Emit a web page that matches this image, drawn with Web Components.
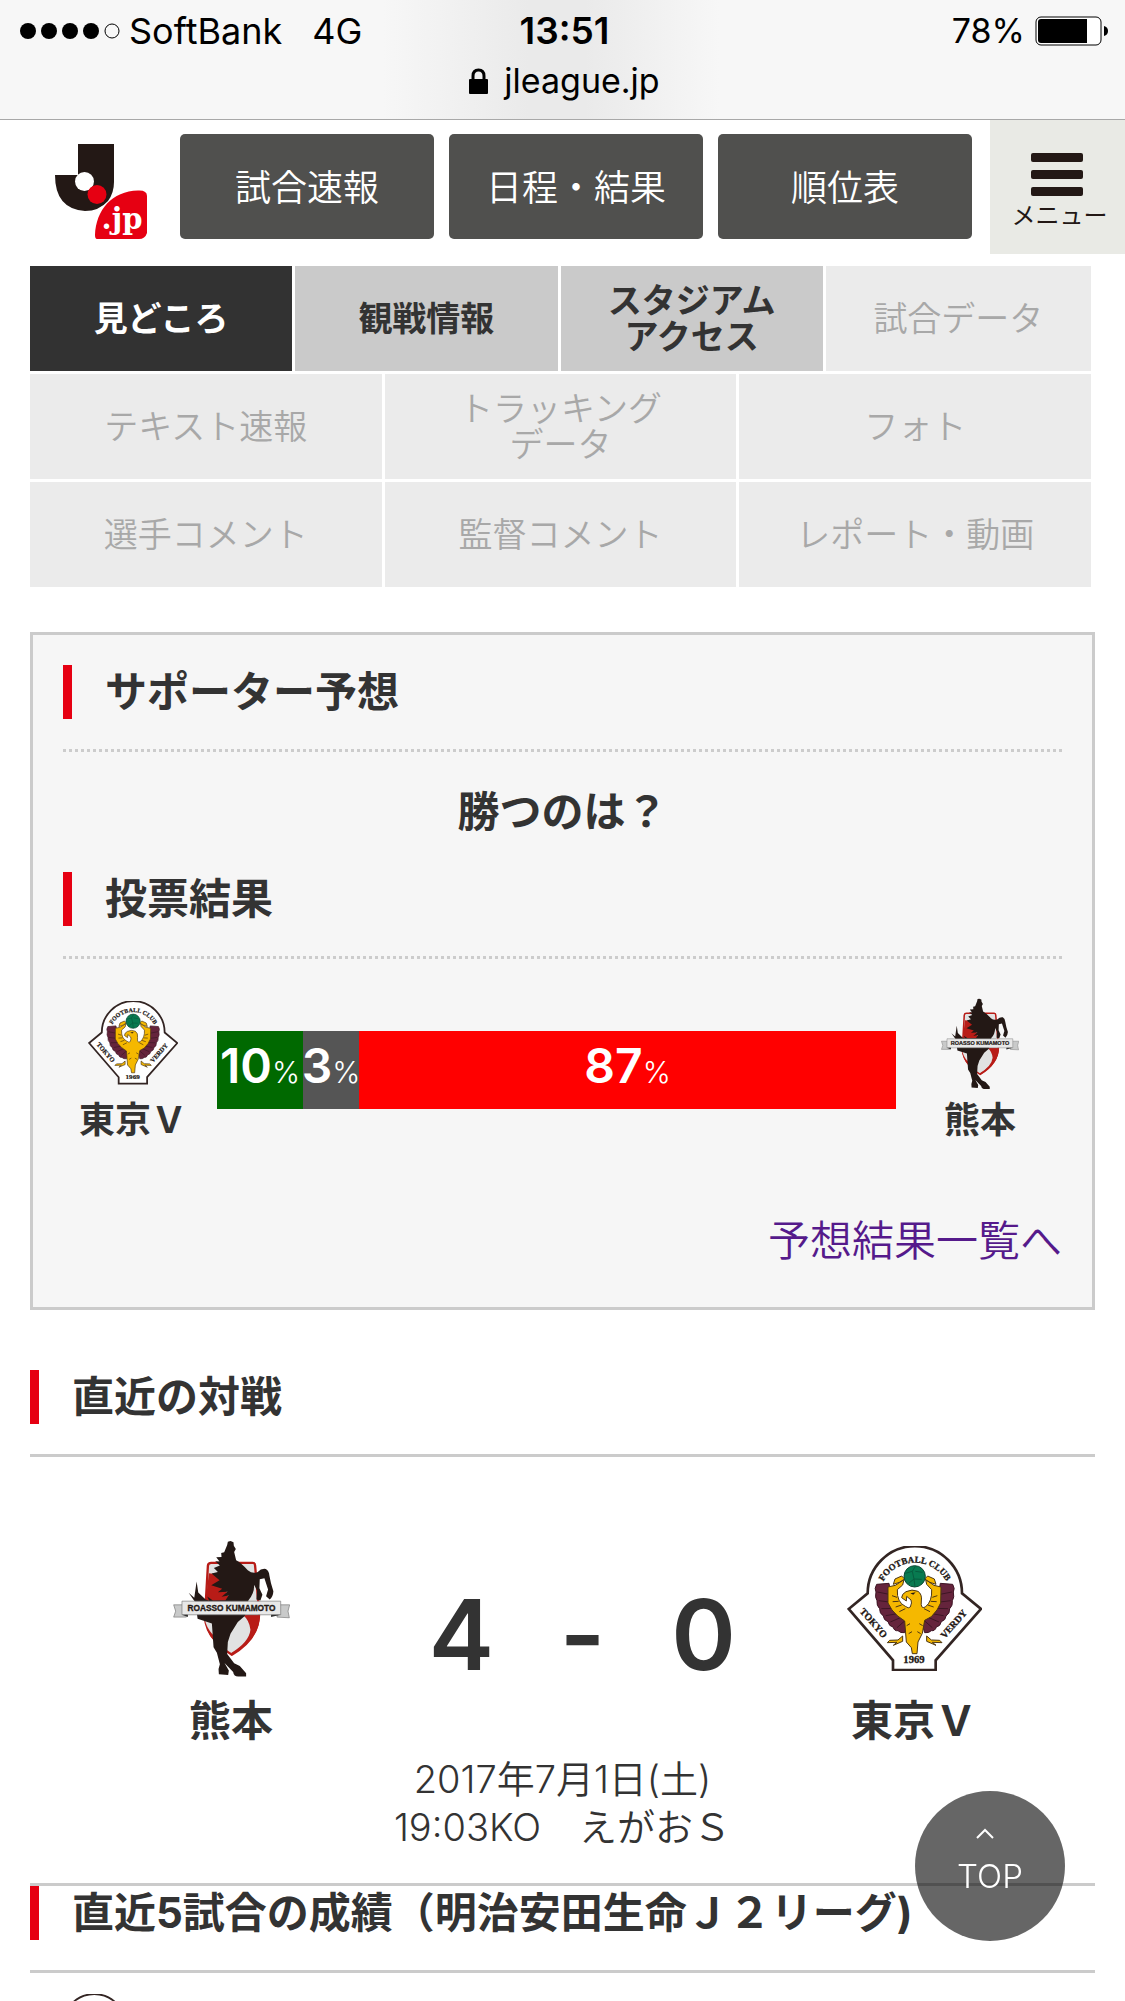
<!DOCTYPE html>
<html lang="ja">
<head>
<meta charset="utf-8">
<meta name="viewport" content="width=device-width">
<title>J.League.jp</title>
<style>
html, body { margin: 0; height: 100%; }
body { background: #fff; color: #333; font-family: "Noto Sans CJK JP", sans-serif; overflow: hidden; }
</style>
</head>
<body>
<match-page></match-page>
<script>
const define = (name, html) => {
  const t = document.createElement('template');
  t.innerHTML = html;
  customElements.define(name, class extends HTMLElement {
    constructor() {
      super();
      this.attachShadow({ mode: 'open' }).append(t.content.cloneNode(true));
    }
  });
};

define('status-bar', `
<style>
:host { display: block; box-sizing: border-box; height: 120px; border-bottom: 1px solid #a8a8a8; color: #000;
  background: linear-gradient(90deg, #f7f7f7 34%, #eaeaea 47%, #eaeaea 52%, #f7f7f7 64%);
  font: 400 36px/50px Inter, sans-serif; padding: 6px 16px 0 20px; }
.row { display: grid; grid-template-columns: 1fr auto 1fr; align-items: center; }
.left, .right, .url { display: flex; align-items: center; }
.left { gap: 8px; }
.right { justify-content: flex-end; gap: 10px; font-size: 34px; }
.net { margin-left: 22px; }
.time { font-weight: 600; font-size: 37px; }
.url { justify-content: center; gap: 16px; font-size: 34px; }
svg { display: block; }
</style>
<div class="row">
  <div class="left">
    <svg width="101" height="18"><g><circle cx="8" cy="9" r="8"/><circle cx="29" cy="9" r="8"/><circle cx="50" cy="9" r="8"/><circle cx="71" cy="9" r="8"/></g><circle cx="92" cy="9" r="7" fill="none" stroke="#000"/></svg>
    <span>SoftBank</span><span class="net">4G</span>
  </div>
  <span class="time">13:51</span>
  <div class="right"><span>78%</span>
    <svg width="74" height="30"><rect x="1" y="1" width="65" height="28" rx="5" fill="#fff" stroke="#000"/><path d="M6 3H52V27H6Q3 27 3 24V6Q3 3 6 3Z"/><path d="M69 10Q73 11 73 15T69 20Z"/></svg>
  </div>
</div>
<div class="url">
  <svg width="19" height="26"><rect y="11" width="19" height="15" rx="1"/><path d="M4 12V8Q4 2 9.500 2T15 8V12" fill="none" stroke="#000" stroke-width="3"/></svg>
  <span>jleague.jp</span>
</div>`);

define('site-header', `
<style>
:host { display: flex; align-items: flex-start; height: 134px; padding-left: 55px; }
.logo { margin: 23px 33px 0 0; display: block; width: 92px; height: 97px; }
nav { flex: 1; display: flex; gap: 15px; margin: 14px 18px 0 0; }
nav a { flex: 1; box-sizing: border-box; height: 105px; padding-bottom: 4px; border-radius: 5px; background: #50504e; color: #fff; text-decoration: none;
  font-size: 36px; font-weight: 350; display: flex; align-items: center; justify-content: center; }
button { border: 0; margin: 0; padding: 33px 0 0 4px; width: 135px; height: 134px; background: #e9eae5; color: #231815;
  font: 400 24px/32px "Noto Sans CJK JP", sans-serif; display: flex; flex-direction: column; align-items: center; gap: 2px; white-space: nowrap; }
button svg { margin-right: 6px; }
svg { display: block; }
</style>
<a class="logo" href="#" aria-label="J.League">
<svg width="92" height="97" viewBox="55 143 92 97">
  <path d="M78 144H114V182Q114 193 108 201Q99 211 85 211Q55 209 55 175H78Z" fill="#231815"/>
  <circle cx="84.500" cy="181.500" r="9.500" fill="#fff"/><circle cx="97" cy="194.500" r="9.500" fill="#e60012"/>
  <path d="M95 235C96 210 112 191 138 190.500Q147 190 147 196V233Q145 239 139 239H97Q95 239 95 235Z" fill="#e60012"/>
  <text x="122" y="229" text-anchor="middle" font-family="DejaVu Serif" font-weight="700" font-size="29" fill="#fff">.jp</text>
</svg></a>
<nav><a href="#">試合速報</a><a href="#">日程・結果</a><a href="#">順位表</a></nav>
<button type="button"><svg width="52" height="43" fill="#231815"><rect width="52" height="9" rx="2"/><rect y="17" width="52" height="9" rx="2"/><rect y="34" width="52" height="9" rx="2"/></svg><span>メニュー</span></button>`);

define('tab-row', `
<style>
:host { display: flex; gap: 3px; }
::slotted(*) { flex: 1 1 0; }
:host([four]) ::slotted(:not(:last-child)) { flex: 0 0 calc(25% - 3px); }
</style><slot></slot>`);

customElements.define('match-tab', class extends HTMLElement {
  connectedCallback() {
    const off = this.hasAttribute('disabled');
    this.attachShadow({ mode: 'open' }).innerHTML = `
<style>
:host { display: block; min-width: 0; }
a, button { box-sizing: border-box; width: 100%; height: 105px; margin: 0; padding: 0 0 4px; border: 0; display: flex; align-items: center;
  justify-content: center; text-align: center; text-decoration: none; white-space: pre-line;
  font: 700 34px/36px "Noto Sans CJK JP", sans-serif; background: #cacaca; color: #333; }
button { font-weight: 350; background: #ebebeb; color: #a8a8a8; }
:host([current]) a { background: #323232; color: #fff; }
</style>` + (off ? '<button type="button" disabled><span><slot></slot></span></button>' : '<a href="#"><span><slot></slot></span></a>');
  }
});

define('section-title', `
<style>
:host { display: block; padding-bottom: 30px; border-bottom: 3px solid #cbcbcb; }
:host([dotted]) { border: 0; padding-bottom: 33px;
  background: repeating-linear-gradient(90deg, #ccc 0 3px, transparent 3px 6px) left bottom / 100% 3px no-repeat; }
h2 { margin: 0; border-left: 9px solid #e60012; padding-left: 33px; font: 700 42px/54px Inter, "Noto Sans CJK JP", sans-serif; white-space: nowrap; }
</style><h2><slot></slot></h2>`);

define('verdy-crest', `
<style>:host { display: block; aspect-ratio: 405 / 377; } svg { display: block; width: 100%; height: 100%; }</style>
<svg viewBox="85 75 405 377">
  <path d="M147 217A141 141 0 0 1 430 217L487 264L351 418V447H223V418L90 264Z" fill="#fff" stroke="#332523" stroke-width="8"/>
  <defs><path id="top" d="M191 188A107 107 0 0 1 386 188"/><path id="l" d="M122 272L196 356"/><path id="r" d="M378 354L452 270"/></defs>
  <g font-family="Liberation Serif" font-weight="700" fill="#231815" stroke="#231815">
    <text font-size="27" text-anchor="middle"><textPath href="#top" startOffset="50%">FOOTBALL CLUB</textPath></text>
    <text font-size="29"><textPath href="#l">TOKYO</textPath></text>
    <text font-size="29"><textPath href="#r">VERDY</textPath></text>
    <text x="286" y="427" font-size="32" text-anchor="middle">1969</text>
  </g>
  <g fill="#65243c" stroke="#3d1624" stroke-width="3">
    <path d="M211 187L174 190Q166 203 172 213Q168 229 175 239Q173 254 183 263Q182 277 194 285Q195 298 208 302Q211 316 223 318Q227 331 238 329Q245 337 258 335L274 280L220 240Z"/>
    <path d="M365 187L402 190Q410 203 404 213Q408 229 401 239Q403 254 393 263Q394 277 382 285Q381 298 368 302Q365 316 353 318Q349 331 338 329Q331 337 318 335L302 280L356 240Z"/>
    <path d="M176 213L222 222M180 239L228 245M188 263L235 262M201 284L243 277M215 303L250 288M235 320L258 300M400 213L354 222M396 239L348 245M388 263L341 262M375 284L333 277M361 303L326 288M341 320L318 300" fill="none"/>
  </g>
  <g fill="#f5b800" stroke="#4b3512" stroke-width="3" stroke-linejoin="round">
    <path d="M208 198L230 193L256 176L252 192L236 206Q234 244 260 256Q270 264 275 258Q281 244 277 237L264 226L263 240L249 230Q249 219 262 212Q280 203 298 211Q311 220 308 240Q305 266 320 258Q341 241 339 206L324 190L321 176L346 193L367 198L366 246L355 267L338 287L318 298L311 337L298 363L295 398H281L278 380L263 363L258 300L237 285L220 267L208 246Z"/>
    <path d="M252 345L238 357L213 358L206 365L235 364L224 373L252 361ZM324 345L338 357L363 358L370 365L341 364L352 373L324 361Z"/>
    <path d="M229 174L249 165L258 174L242 184L224 190ZM347 174L327 165L318 174L334 184L352 190Z"/>
    <path d="M220 224L235 229M222 242L240 241M231 258L249 252M242 272L260 263M356 224L341 229M354 242L336 241M345 258L327 252M334 272L316 263M264 314L274 308M270 338L280 332M312 314L302 308M306 338L296 332" fill="none"/>
  </g>
  <circle cx="288" cy="166" r="32" fill="#087a50" stroke="#0d4733" stroke-width="3"/>
  <path d="M260 157L281 151L290 136M281 151L286 174L270 187M286 174L309 175M290 151L312 154M286 174L289 197" fill="none" stroke="#075b3e" stroke-width="3"/>
  <path d="M275 217L291 214L284 221Z" fill="#231815"/>
</svg>`);

define('roasso-crest', `
<style>:host { display: block; aspect-ratio: 352 / 412; } svg { display: block; width: 100%; height: 100%; }</style>
<svg viewBox="75 55 352 412">
  <path d="M190 124H315Q322 124 322 132L334 270Q337 350 252 400Q170 350 172 270L180 132Q181 124 190 124Z" fill="#e1e2e2" stroke="#b81c17" stroke-width="7"/>
  <path d="M183 155L205 158L230 190L248 250H172ZM285 280H336Q338 350 252 402L250 395Q304 362 308 325Q305 297 285 280ZM166 280L205 300L200 360Q171 333 166 280Z" fill="#b81c17"/>
  <path d="M170 290Q175 320 195 340L198 300Z" fill="#e1e2e2"/>
  <path d="M248 58L257 62L258 72L264 82L259 91L265 116Q280 124 300 146Q315 158 330 151Q340 140 354 142Q364 147 365 162Q368 182 377 209Q376 226 366 234L355 224L361 204L350 170L336 173L335 200L344 220L338 237L326 234L328 207L319 190Q320 216 302 236L291 284L270 302L248 337L240 362L238 398L259 426L276 434L295 456V466H271Q258 466 256 452L230 425L243 448L241 461L213 459L212 443L216 429L207 394L197 378L192 306L149 292L142 242L122 214L139 229L146 180L151 213L173 234L184 238L178 225L195 237L233 236L242 222L221 226L239 211L210 212L223 202L190 191L215 176L191 156L210 151L198 139L216 132L202 119L215 120L205 107L221 106L220 94L229 92L238 70L240 60Z" fill="#231815"/>
  <g stroke="#777" stroke-width="2"><path d="M77 250H115V287H77L83 269ZM388 250H426L421 269L425 289L388 287Z" fill="#c9caca"/>
  <path d="M102 239H399V280H102Z" fill="#e8e8e8"/></g>
  <path d="M102 280L120 287V280ZM399 280L370 287V280Z" fill="#333"/>
  <text x="251" y="268" text-anchor="middle" font-family="Liberation Sans" font-weight="700" font-size="25" fill="#231815" stroke="#231815">ROASSO KUMAMOTO</text>
</svg>`);

define('team-badge', `
<style>
:host { display: block; width: 136px; text-align: center; font-weight: 700; font-size: 36px; line-height: 54px; }
.crest { height: 90px; display: grid; place-items: center; margin-bottom: 2px; }
.name { padding-bottom: 2px; }
::slotted(verdy-crest) { width: 90px; }
::slotted(roasso-crest) { width: 78px; }
:host([large]) { font-size: 42px; }
:host([large]) .crest { height: 137px; margin-bottom: 14px; }
:host([large]) ::slotted(verdy-crest) { width: 135px; }
:host([large]) ::slotted(roasso-crest) { width: 117px; }
</style><div class="crest"><slot name="crest"></slot></div><div class="name"><slot></slot></div>`);

define('vote-bar', `
<style>
:host { display: flex; flex: 1; height: 78px; margin-top: 33px; color: #fff; }
div { display: flex; justify-content: center; align-items: baseline; min-width: 0; font: 600 48px/70px Inter, sans-serif; }
small { font-size: 30px; line-height: 40px; font-weight: 300; }
.home { flex: 0 0 86px; background: #006900; }
.draw { flex: 0 0 56px; background: #555; }
.away { flex: 1; background: #f00; }
</style>
<div class="home">10<small>%</small></div><div class="draw">3<small>%</small></div><div class="away">87<small>%</small></div>`);

define('vote-panel', `
<style>
:host { display: block; border: 3px solid #cbcbcb; background: #f6f6f6; padding: 30px 30px 42px; }
.q { margin: 30px 0 36px; text-align: center; font-size: 42px; line-height: 54px; font-weight: 700; }
.row { display: flex; align-items: flex-start; gap: 16px; margin: 39px 14px 65px 2px; }
.more { text-align: right; font-size: 42px; line-height: 54px; font-weight: 350; }
a { color: #551a8b; text-decoration: none; }
</style>
<section-title dotted>サポーター予想</section-title>
<p class="q">勝つのは？</p>
<section-title dotted>投票結果</section-title>
<div class="row">
  <team-badge><verdy-crest slot="crest"></verdy-crest>東京Ｖ</team-badge>
  <vote-bar></vote-bar>
  <team-badge><roasso-crest slot="crest"></roasso-crest>熊本</team-badge>
</div>
<div class="more"><a href="#">予想結果一覧へ</a></div>`);

define('match-result', `
<style>
:host { display: block; padding: 83px 0 31px; border-bottom: 3px solid #cbcbcb; }
.row { display: flex; justify-content: center; gap: 82px; padding-left: 20px; }
.score { flex: 0 0 363px; padding: 25px 0 0 20px; display: grid; grid-template-columns: 1fr 1fr 1fr; text-align: center;
  font: 600 98px/140px Inter, sans-serif; height: 140px; }
p { margin: 8px 0 1px; text-align: center; font: 350 38px/48px Inter, "Noto Sans CJK JP", sans-serif; }
</style>
<div class="row">
  <team-badge large><roasso-crest slot="crest"></roasso-crest>熊本</team-badge>
  <div class="score"><span>4</span><span>-</span><span>0</span></div>
  <team-badge large><verdy-crest slot="crest"></verdy-crest>東京Ｖ</team-badge>
</div>
<p>2017年7月1日(土)<br>19:03KO　えがおＳ</p>`);

define('top-link', `
<style>
:host { position: fixed; right: 60px; bottom: 60px; }
a { box-sizing: border-box; width: 150px; height: 150px; border-radius: 50%; background: rgba(0,0,0,.6); color: #fff; text-decoration: none;
  display: flex; flex-direction: column; align-items: center; gap: 17px; padding-top: 37px; font: 300 33px/40px Inter, sans-serif; }
svg { display: block; margin-right: 10px; }
</style>
<a href="#"><svg width="18" height="11" fill="none" stroke="#fff" stroke-width="2"><path d="M1 10L9 2L17 10"/></svg><span>TOP</span></a>`);

define('match-page', `
<style>
:host { display: block; height: 100vh; overflow: hidden; }
main { padding: 12px 30px 0; }
.tabs { display: grid; gap: 3px; margin: 0 4px 45px 0; }
vote-panel { margin-bottom: 60px; }
.recent { width: 90px; margin: 21px 0 0 19px; }
</style>
<status-bar></status-bar>
<site-header></site-header>
<main>
  <div class="tabs">
    <tab-row four><match-tab current>見どころ</match-tab><match-tab>観戦情報</match-tab><match-tab>スタジアム
アクセス</match-tab><match-tab disabled>試合データ</match-tab></tab-row>
    <tab-row><match-tab disabled>テキスト速報</match-tab><match-tab disabled>トラッキング
データ</match-tab><match-tab disabled>フォト</match-tab></tab-row>
    <tab-row><match-tab disabled>選手コメント</match-tab><match-tab disabled>監督コメント</match-tab><match-tab disabled>レポート・動画</match-tab></tab-row>
  </div>
  <vote-panel></vote-panel>
  <section-title>直近の対戦</section-title>
  <match-result></match-result>
  <section-title>直近5試合の成績（明治安田生命Ｊ２リーグ)</section-title>
  <verdy-crest class="recent"></verdy-crest>
</main>
<top-link></top-link>`);
</script>
</body>
</html>
